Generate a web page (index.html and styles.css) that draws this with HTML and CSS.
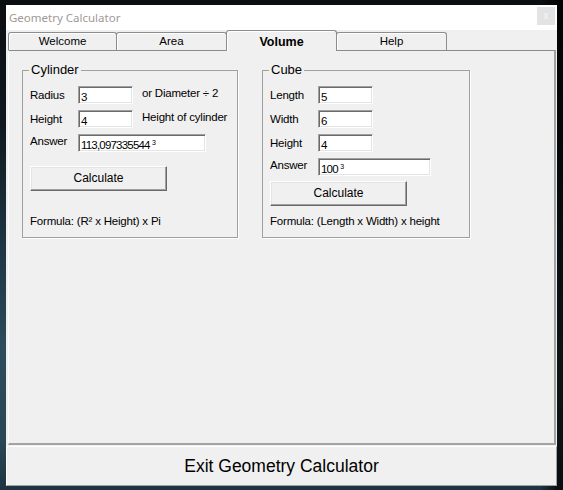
FILE: index.html
```html
<!DOCTYPE html>
<html>
<head>
<meta charset="utf-8">
<link rel="stylesheet" href="styles.css">
</head>
<body>
<div class="window">
  <div class="titlebar">
    <span class="title">Geometry Calculator</span>
    <span class="close">x</span>
  </div>
  <div class="client">
    <div class="tabs">
      <div class="tab tab-first">Welcome</div>
      <div class="tab">Area</div>
      <div class="tab tab-active">Volume</div>
      <div class="tab">Help</div>
    </div>
    <div class="panel">
      <div class="group group-cyl">
        <span class="legend">Cylinder</span>
        <div class="row">
          <span class="label">Radius</span>
          <span class="input">3</span>
          <span class="hint">or Diameter ÷ 2</span>
        </div>
        <div class="row">
          <span class="label">Height</span>
          <span class="input">4</span>
          <span class="hint">Height of cylinder</span>
        </div>
        <div class="row">
          <span class="label label-ans">Answer</span>
          <span class="input input-wide">113,097335544 <sup>3</sup></span>
        </div>
        <div class="btn btn-cyl">Calculate</div>
        <div class="formula">Formula: (R² x Height) x Pi</div>
      </div>
      <div class="group group-cube">
        <span class="legend">Cube</span>
        <div class="row">
          <span class="label">Length</span>
          <span class="input">5</span>
        </div>
        <div class="row">
          <span class="label">Width</span>
          <span class="input">6</span>
        </div>
        <div class="row">
          <span class="label">Height</span>
          <span class="input">4</span>
        </div>
        <div class="row">
          <span class="label label-ans">Answer</span>
          <span class="input input-cube">100 <sup>3</sup></span>
        </div>
        <div class="btn btn-cube">Calculate</div>
        <div class="formula">Formula: (Length x Width) x height</div>
      </div>
    </div>
    <div class="exit">Exit Geometry Calculator</div>
  </div>
</div>
</body>
</html>
```

FILE: styles.css
```css
html, body {
  margin: 0;
  padding: 0;
}
body {
  width: 563px;
  height: 490px;
  overflow: hidden;
  font-family: "Liberation Sans", Arial, sans-serif;
  background:
    linear-gradient(to right, rgba(0,0,0,0) 96%, rgba(0,0,0,0.75) 99%),
    linear-gradient(to bottom, #0b0e11 0%, #101820 25%, #1f3644 50%, #2e4d5c 72%, #2a4856 90%, #1d3440 100%);
}
.window {
  margin: 5px 0 0 6px;
  width: 551px;
  height: 481px;
  display: flex;
  flex-direction: column;
}
.titlebar {
  height: 25px;
  background: #fff;
  display: flex;
  align-items: flex-start;
  padding-left: 3px;
}
.title {
  font-family: "Noto Sans", "Open Sans", sans-serif;
  font-size: 11.5px;
  color: #a09a96;
  line-height: 25px;
}
.close {
  margin-left: auto;
  margin-right: 2px;
  margin-top: 2px;
  width: 18px;
  height: 18px;
  background: #e3e3e3;
  color: #f7f7f7;
  font-size: 10px;
  line-height: 17px;
  text-align: center;
}
.client {
  flex: 1;
  background: #f0f0f0;
  display: flex;
  flex-direction: column;
}
.tabs {
  height: 20px;
  display: flex;
  align-items: flex-end;
  padding-left: 2px;
  position: relative;
  z-index: 1;
}
.tab {
  box-sizing: border-box;
  width: 111px;
  height: 18px;
  border: 1px solid #8c8c8c;
  border-bottom: none;
  border-radius: 3px 3px 0 0;
  box-shadow: inset 1px 1px 0 #fff;
  font-size: 11.5px;
  line-height: 17px;
  text-align: center;
  color: #000;
  margin-right: -1px;
}
.tab-first {
  width: 109px;
}
.tab-active {
  height: 21px;
  margin-bottom: -1px;
  font-weight: bold;
  font-size: 12.5px;
  line-height: 22px;
  background: #f0f0f0;
}
.panel {
  box-sizing: border-box;
  height: 395px;
  margin: 0 1px 0 2px;
  border-top: 1px solid #8a8a8a;
  border-left: 1px solid #fcfcfc;
  border-right: 2px solid #a3a3a3;
  border-bottom: 2px solid #a3a3a3;
  display: flex;
  align-items: flex-start;
  gap: 24px;
  padding: 19px 0 0 13px;
}
.group {
  position: relative;
  box-sizing: border-box;
  height: 168px;
  border: 1px solid #a0a0a0;
  box-shadow: 1px 1px 0 #fff;
  padding: 15px 0 9px 7px;
  display: flex;
  flex-direction: column;
  gap: 6px;
}
.group-cyl { width: 216px; }
.group-cube { width: 208px; }
.legend {
  position: absolute;
  top: -9px;
  left: 6px;
  padding: 0 2px;
  background: #f0f0f0;
  font-size: 13px;
  line-height: 16px;
  color: #000;
}
.row {
  display: flex;
  align-items: flex-start;
  height: 18px;
}
.label {
  width: 48px;
  font-size: 11.5px;
  line-height: 14px;
  padding-top: 2px;
  letter-spacing: -0.2px;
  color: #000;
}
.label-ans {
  padding-top: 0;
}
.input {
  box-sizing: border-box;
  width: 55px;
  height: 18px;
  background: #fff;
  border: 1px solid;
  border-color: #a0a0a0 #fff #fff #a0a0a0;
  box-shadow: inset 1px 1px 0 #696969, inset -1px -1px 0 #e3e3e3;
  font-size: 11.5px;
  line-height: 14px;
  padding: 3px 0 0 2px;
  letter-spacing: -0.8px;
  color: #000;
  white-space: nowrap;
}
.input sup {
  font-size: 7px;
  vertical-align: 4px;
  line-height: 0;
  letter-spacing: 0;
}
.input-wide { width: 128px; }
.input-cube { width: 113px; }
.hint {
  margin-left: 9px;
  font-size: 11.5px;
  line-height: 14px;
  letter-spacing: -0.2px;
  color: #000;
}
.btn {
  box-sizing: border-box;
  width: 137px;
  height: 25px;
  background: #f0f0f0;
  border: 1px solid;
  border-color: #fff #696969 #696969 #fff;
  box-shadow: inset -1px -1px 0 #a0a0a0, inset 1px 1px 0 #e3e3e3;
  font-size: 12px;
  line-height: 22px;
  text-align: center;
  color: #000;
}
.btn-cyl {
  margin-top: 8px;
}
.btn-cube {
  margin-top: -1px;
}
.formula {
  margin-top: auto;
  font-size: 11.5px;
  line-height: 14px;
  letter-spacing: -0.2px;
  color: #000;
}
.exit {
  box-sizing: border-box;
  margin-top: 1px;
  height: 40px;
  width: 551px;
  border: 1px solid;
  border-color: #fff #a0a0a0 #a0a0a0 #fff;
  background: #f0f0f0;
  font-size: 17.5px;
  line-height: 38px;
  text-align: center;
  color: #000;
}
```
